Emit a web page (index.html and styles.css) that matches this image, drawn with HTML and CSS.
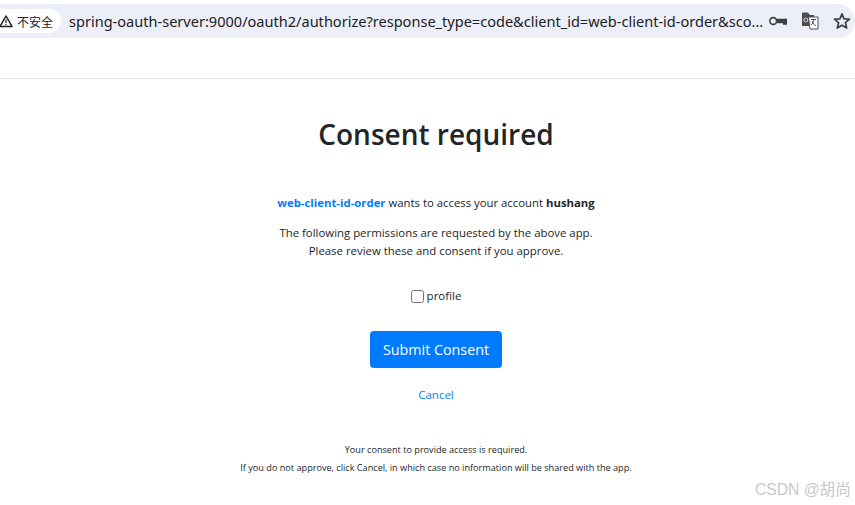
FILE: index.html
```html
<!DOCTYPE html>
<html lang="en">
<head>
<meta charset="utf-8">
<title>Consent required</title>
<link rel="stylesheet" href="styles.css">
</head>
<body>
<header class="browser">
  <div class="omnibox">
    <div class="chip">
      <svg class="warn" viewBox="0 0 14 14" width="14" height="14"><path d="M6 2 L12 12.400 H0 Z" fill="none" stroke="#202124" stroke-width="1.500" stroke-linejoin="round"/><path d="M6 5.600V9M6 10V11.200" stroke="#202124" stroke-width="1.200"/></svg>
      <span>不安全</span>
    </div>
    <div class="url">spring-oauth-server:9000/oauth2/authorize?response_type=code&amp;client_id=web-client-id-order&amp;sco...</div>
    <div class="tools">
      <svg viewBox="0 0 18 10" width="18" height="10"><circle cx="4.200" cy="5" r="3.400" fill="none" stroke="#3c4043" stroke-width="1.600"/><path d="M7.800 2.800H18V8.800H14V7.200H7.800Z" fill="#3c4043"/></svg>
      <svg viewBox="0 0 18 18" width="18" height="18"><path d="M1 1.500C1 .8 1.500.5 2 .5H7L9 3H13V14H2C1.400 14 1 13.600 1 13Z" fill="#4a4d50"/><path d="M7.500 5H17V17H9Z" fill="#fff" stroke="#4a4d50"/><path d="M10 7.500H15M12.500 7.500C12.500 10 11.500 12 10 13M11 9C12 11.500 13.500 13 15 14" fill="none" stroke="#4a4d50"/><circle cx="4.800" cy="8" r="2" fill="none" stroke="#ddd"/></svg>
      <svg viewBox="0 0 18 18" width="18" height="18"><path d="M9 1.800 L11.100 6.800 L16.500 7.200 L12.400 10.700 L13.700 16 L9 13.200 L4.300 16 L5.600 10.700 L1.500 7.200 L6.900 6.800 Z" fill="none" stroke="#3c4043" stroke-width="1.700" stroke-linejoin="round"/></svg>
    </div>
  </div>
</header>
<main class="page">
  <h1 class="title">Consent required</h1>
  <p class="who"><a class="client" href="#">web-client-id-order</a> wants to access your account <b>hushang</b></p>
  <p class="explain">The following permissions are requested by the above app.<br>Please review these and consent if you approve.</p>
  <form class="form">
    <label class="scope"><input class="check" type="checkbox"><span>profile</span></label>
    <button class="submit" type="button">Submit Consent</button>
    <a class="cancel" href="#">Cancel</a>
  </form>
  <p class="note first">Your consent to provide access is required.</p>
  <p class="note">If you do not approve, click Cancel, in which case no information will be shared with the app.</p>
</main>
<div class="watermark">CSDN @胡尚</div>
</body>
</html>
```
FILE: styles.css
```css
* { box-sizing: border-box; }
html, body { margin: 0; height: 100%; }
body {
  width: 855px;
  height: 505px;
  overflow: hidden;
  background: #fff;
  color: #212529;
  font-family: "Open Sans", "Noto Sans CJK SC", sans-serif;
  position: relative;
}
.browser {
  height: 79px;
  padding-top: 4px;
  border-bottom: 1px solid #e0e0e0;
}
.omnibox {
  height: 34px;
  background: #edeff8;
  border-radius: 0 17px 17px 0;
  display: flex;
  align-items: center;
}
.chip {
  flex: none;
  width: 61px;
  height: 24px;
  background: #fff;
  border-radius: 0 12px 12px 0;
  display: flex;
  align-items: center;
  gap: 3px;
  font-size: 12px;
  color: #202124;
  font-family: "Noto Sans CJK SC", sans-serif;
}
.warn { flex: none; }
.url {
  flex: none;
  margin-left: 8px;
  width: 694px;
  font-size: 14.550px;
  color: #202124;
  white-space: nowrap;
  overflow: hidden;
  font-family: "Noto Sans", sans-serif;
}
.tools {
  display: flex;
  align-items: center;
  gap: 14px;
  margin-left: 6px;
}
.tools svg { flex: none; }
.page {
  display: flex;
  flex-direction: column;
  align-items: center;
  padding-left: 17px;
}
.title {
  margin: 37px 0 0;
  font-size: 28px;
  line-height: 36px;
  font-weight: 600;
}
.who {
  margin: 42px 0 0;
  font-size: 11.350px;
  line-height: 18px;
}
.client { color: #007bff; font-weight: 700; text-decoration: none; }
.who b { font-weight: 700; }
.explain {
  margin: 12px 0 0;
  font-size: 11.400px;
  line-height: 18px;
  text-align: center;
}
.form {
  display: flex;
  flex-direction: column;
  align-items: center;
}
.scope {
  margin-top: 27px;
  display: flex;
  align-items: center;
  gap: 3px;
  font-size: 11.500px;
  line-height: 18px;
}
.check {
  margin: 0;
  width: 13px;
  height: 13px;
}
.submit {
  margin-top: 26px;
  width: 132px;
  height: 37px;
  border: 0;
  border-radius: 4px;
  background: #007bff;
  color: #fff;
  font-family: inherit;
  font-size: 14.300px;
}
.cancel {
  margin-top: 18px;
  color: #007bff;
  font-size: 11.500px;
  line-height: 18px;
  text-decoration: none;
}
.note {
  margin: 0;
  font-size: 9.150px;
  line-height: 18px;
}
.first { margin-top: 37px; }
.watermark {
  position: absolute;
  right: 4px;
  bottom: 5px;
  font-family: "Liberation Sans", "Noto Sans CJK SC", sans-serif;
  font-size: 15.700px;
  color: #c8c8c8;
}
```
